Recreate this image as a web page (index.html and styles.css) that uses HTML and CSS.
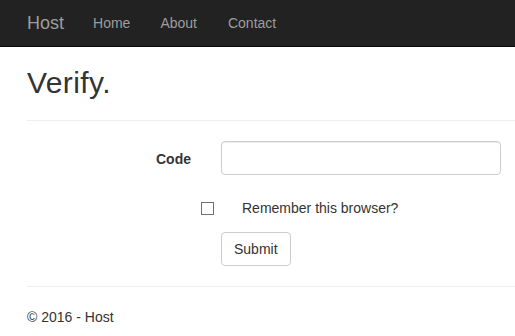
FILE: index.html
```html
<!DOCTYPE html>
<html lang="en">
<head>
    <meta charset="UTF-8">
    <meta name="viewport" content="width=device-width, initial-scale=1.0">
    <title>Verify - Host</title>
    <link rel="stylesheet" href="styles.css">
</head>
<body>
    <div class="navbar">
        <a class="brand" href="#">Host</a>
        <ul class="nav">
            <li><a href="#">Home</a></li>
            <li><a href="#">About</a></li>
            <li><a href="#">Contact</a></li>
        </ul>
    </div>

    <div class="container">
        <h2>Verify.</h2>
        <hr>

        <form class="form-horizontal">
            <div class="form-group">
                <label class="control-label" for="code">Code</label>
                <input class="form-control" type="text" id="code">
            </div>
            <div class="form-group">
                <div class="checkbox">
                    <input type="checkbox" id="remember">
                    <label for="remember">Remember this browser?</label>
                </div>
            </div>
            <div class="form-group">
                <button type="button" class="btn">Submit</button>
            </div>
        </form>

        <hr class="footer-rule">
        <footer>
            <p>&copy; 2016 - Host</p>
        </footer>
    </div>
</body>
</html>
```

FILE: styles.css
```css
body {
    margin: 0;
    font-family: "Liberation Sans", Arial, sans-serif;
    font-size: 14px;
    line-height: 20px;
    color: #333;
    background-color: #fff;
}
a {
    text-decoration: none;
}
.navbar {
    display: flex;
    align-items: center;
    height: 46px;
    padding-left: 27px;
    background-color: #222;
    border-bottom: 1px solid #080808;
}
.brand {
    font-size: 18px;
    line-height: 20px;
    color: #9d9d9d;
    margin-right: 14px;
}
.nav {
    display: flex;
    list-style: none;
    margin: 0;
    padding: 0;
}
.nav a {
    display: block;
    padding: 0 15px;
    color: #9d9d9d;
}
.nav li:nth-child(3) a {
    padding-left: 16px;
}
.container {
    padding-left: 27px;
}
h2 {
    margin: 19px 0 0;
    font-size: 30px;
    font-weight: normal;
    line-height: 33px;
    letter-spacing: 0.4px;
}
hr {
    margin: 21px 0 20px;
    border: 0;
    border-top: 1px solid #eee;
}
.footer-rule {
    margin-top: 20px;
}
.form-horizontal {
    display: grid;
    grid-template-columns: 164px 280px;
    column-gap: 30px;
}
.form-group {
    grid-column: 2;
    margin-bottom: 14px;
}
.form-group:first-child {
    grid-column: 1 / span 2;
    display: grid;
    grid-template-columns: 164px 280px;
    column-gap: 30px;
    margin-bottom: 23px;
}
.control-label {
    padding-top: 8px;
    text-align: right;
    font-weight: bold;
}
.form-control {
    box-sizing: border-box;
    height: 34px;
    padding: 6px 12px;
    font: inherit;
    border: 1px solid #ccc;
    border-radius: 4px;
    box-shadow: inset 0 1px 1px rgba(0,0,0,0.075);
}
.checkbox {
    display: flex;
    align-items: center;
    margin-left: -20px;
}
.checkbox input {
    appearance: none;
    box-sizing: border-box;
    width: 13px;
    height: 13px;
    margin: 0 28px 0 0;
    border: 1px solid #707070;
    background-color: #fff;
}
.checkbox input:checked {
    background-color: #333;
}
.btn {
    height: 34px;
    padding: 6px 12px;
    font: inherit;
    color: #333;
    background-color: #fff;
    border: 1px solid #ccc;
    border-radius: 4px;
    cursor: pointer;
}
.form-group:last-child {
    margin-bottom: 0;
}
footer p {
    margin: 0;
}
```
